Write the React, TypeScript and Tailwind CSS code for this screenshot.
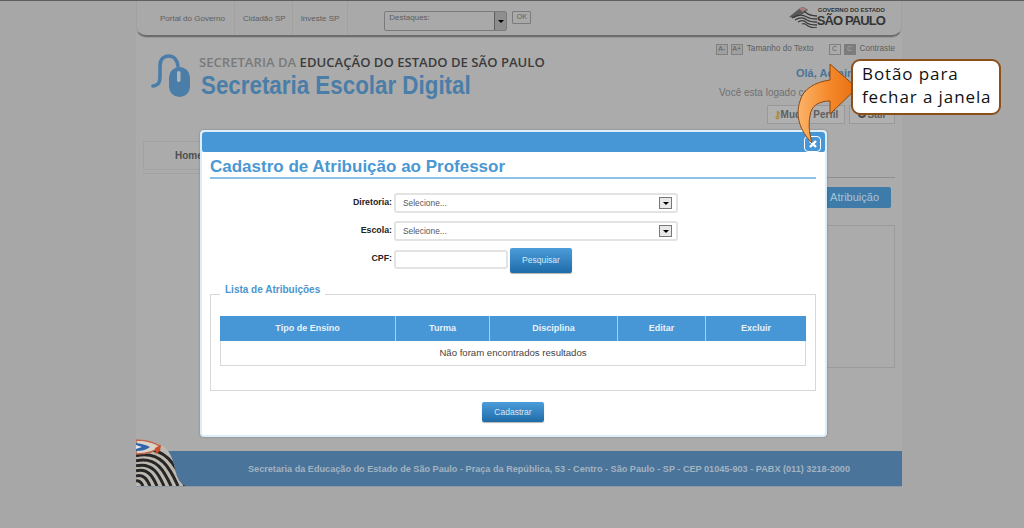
import React from 'react';

const columns = [
  { label: 'Tipo de Ensino', width: 'w-[176px]' },
  { label: 'Turma', width: 'w-[94px]' },
  { label: 'Disciplina', width: 'w-[128px]' },
  { label: 'Editar', width: 'w-[88px]' },
  { label: 'Excluir', width: 'flex-1' },
];

function SelectBox({ width, children }: { width: string; children?: React.ReactNode }) {
  return (
    <div className={`${width} h-[20px] bg-white border-2 border-[#e3e3e3] rounded-[3px] flex items-center justify-between pl-[7px] pr-[4px]`}>
      <span className="text-[8.4px] text-[#555555]">{children}</span>
      <span className="w-[13px] h-[12px] border border-[#777777] bg-[#e9e9e9] flex items-center justify-center">
        <span className="w-0 h-0 border-x-[3px] border-x-transparent border-t-[3px] border-t-black" />
      </span>
    </div>
  );
}

function BlueButton({ className, children }: { className: string; children: React.ReactNode }) {
  return (
    <button className={`${className} rounded-[2px] bg-gradient-to-b from-[#4c9cdb] to-[#1d6ca8] text-[8.5px] text-[#d8e8f4] shadow-[0_1px_1px_rgba(0,0,0,0.3)]`}>
      {children}
    </button>
  );
}

function FormRow({ label, children, className }: { label: string; children: React.ReactNode; className: string }) {
  return (
    <div className={`flex ${className}`}>
      <label className="w-[182px] pt-[3px] text-right text-[8.8px] font-bold text-[#222222]">{label}</label>
      <div className="ml-[2px] flex gap-[2px]">{children}</div>
    </div>
  );
}

const archRadii = [7, 14, 21, 28, 35, 42, 49];

function SpFlag() {
  return (
    <svg width="50" height="47" viewBox="0 0 50 47" className="shrink-0">
      <defs>
        <clipPath id="hump">
          <path d="M0 0 C10 1 20 3 27 7 C34 12 37 20 39 30 C41 39 44 45 50 47 L0 47 Z" />
        </clipPath>
      </defs>
      <g clipPath="url(#hump)">
        <rect width="50" height="47" fill="#bdb8b0" />
        {archRadii.map((r) => (
          <path
            key={r}
            d={`M0 ${47 - r * 0.72} C${r * 0.6} ${47 - r * 0.86} ${r * 0.82} ${47 - r * 0.4} ${r} 47`}
            stroke="#262626"
            strokeWidth="3"
            fill="none"
          />
        ))}
      </g>
      <path d="M0 1 C9 1 17 3 24 7 C20 12 12 15 0 15 Z" fill="#d9d3ca" stroke="#c0664c" strokeWidth="1.6" />
      <path d="M0 4 C6 5 11 6 14 8 C10 11 5 12 0 12 Z" fill="#2f62a8" />
      <path d="M0 6 L6 8 L0 10 Z" fill="#e3e7ea" />
      <path d="M19 9 L25 6 L24 12 L20 15 Z" fill="#c8502c" />
    </svg>
  );
}

function GovLogo() {
  return (
    <div className="flex items-center -mt-[3px]">
      <svg width="28" height="22" viewBox="0 0 28 22" className="shrink-0">
        <path d="M0 11 L11 2 C14 0 17 2 19 4 L14 8 L5 12 Z" fill="#595959" />
        <path d="M10 3 C12 0 16 1 18 4 L14 6 Z" fill="#a57d78" />
        <path d="M3 12 C9 8 13 8 18 11 C21 13 24 13 28 13 M6 14 C11 11 14 11 18 14 C21 16 24 16 28 16 M9 16 C13 14 15 14 18 17 C21 19 24 19 28 19 M13 18 C15 17 17 18 19 20 C21 21 24 22 28 22 M15 5 C18 8 22 10 28 10" stroke="#3b3b3b" strokeWidth="1.3" fill="none" />
      </svg>
      <div className="flex flex-col items-end text-[#343434] font-bold leading-none">
        <span className="text-[6px] tracking-[-0.02px]">GOVERNO DO ESTADO</span>
        <span className="text-[13px] tracking-[-0.9px] mt-[1px]">SÃO PAULO</span>
      </div>
    </div>
  );
}

export default function App() {
  return (
    <div className="relative w-[1024px] h-[528px] overflow-hidden bg-[#a7a7a7] border-t border-[#5e5e5e] font-['Liberation_Sans',Arial,sans-serif]">
      <div className="ml-[136px] w-[766px] h-[486px] flex flex-col bg-[#ababab]">
        {/* top bar */}
        <div className="h-[36px] shrink-0 flex items-center pl-[15px] pr-[16px] rounded-b-[10px] border-b-2 border-x border-x-[#a0a0a0] border-b-[#6d6d6d] bg-[#a9a9a9] text-[8px] text-[#5e5e5e] shadow-[0_1px_0_#9a9a9a]">
          <span className="pl-[8px] pr-[9px] pt-[2px] h-full flex items-center border-r border-[#a1a1a1]">Portal do Governo</span>
          <span className="pl-[8px] pr-[6px] pt-[2px] h-full flex items-center border-r border-[#a1a1a1]">Cidadão SP</span>
          <span className="px-[8px] pt-[2px] h-full flex items-center border-r border-[#a1a1a1]">Investe SP</span>
          <div className="ml-[36px] w-[123px] h-[20px] mt-[6px] border border-[#7b7b7b] rounded-[2px] flex justify-between pl-[4px]">
            <span className="leading-[11px]">Destaques:</span>
            <span className="w-[12px] h-full bg-[#8e8e8e] border-l border-[#5e5e5e] flex items-center justify-center">
              <span className="w-0 h-0 border-x-[3px] border-x-transparent border-t-[3px] border-t-black" />
            </span>
          </div>
          <span className="ml-[5px] mt-[-1px] w-[19px] h-[13px] border border-[#7b7b7b] rounded-[1px] text-[7px] flex items-center justify-center">OK</span>
          <div className="ml-auto"><GovLogo /></div>
        </div>

        {/* logo and tools */}
        <div className="h-[104px] shrink-0 flex justify-between pr-[7px]">
          <div className="flex pl-[15px] pt-[17px]">
            <svg width="40" height="46" viewBox="0 0 40 46" className="shrink-0">
              <path d="M2 32 C8 31 9 28 9 22 L9 12 C9 5 13 2 18 2 C23 2 26 6 27 12" stroke="#4a7ea8" strokeWidth="3.6" strokeLinecap="round" fill="none" />
              <rect x="18" y="13" width="21" height="30" rx="10.5" fill="#4a7ea8" />
              <rect x="26" y="17" width="3.5" height="11" rx="1.7" fill="#b5b5b5" />
            </svg>
            <div className="ml-[8px]">
              <div className="font-['Open_Sans',sans-serif] font-semibold text-[13.1px] leading-[18px] text-[#7a7a7a] whitespace-nowrap mt-[-1px]">
                SECRETARIA DA <span className="text-[#3c3c3c]">EDUCAÇÃO DO ESTADO DE SÃO PAULO</span>
              </div>
              <div className="ml-[2px] -mt-[1px] origin-left scale-x-[0.86] font-bold text-[26px] leading-[30px] text-[#4a7ea8] whitespace-nowrap">
                Secretaria Escolar Digital
              </div>
            </div>
          </div>
          <div className="w-[190px] pt-[6px] flex flex-col items-end text-[#5e5e5e]">
            <div className="flex items-center text-[8.2px] h-[12px]">
              <span className="w-[12px] h-[11px] border border-[#808080] bg-[#a0a0a0] text-[7px] flex items-center justify-center">A-</span>
              <span className="ml-[3px] w-[12px] h-[11px] border border-[#808080] bg-[#a0a0a0] text-[7px] flex items-center justify-center">A+</span>
              <span className="ml-[4px]">Tamanho do Texto</span>
              <span className="ml-[15px] w-[12px] h-[11px] border border-[#808080] text-[7px] flex items-center justify-center">C</span>
              <span className="ml-[3px] w-[12px] h-[11px] bg-[#7c7c7c] text-[7px] text-[#a9a9a9] flex items-center justify-center">C</span>
              <span className="ml-[4px]">Contraste</span>
            </div>
            <div className="mt-[10px] text-[11px] font-bold text-[#4a7499] self-start ml-[91px] whitespace-nowrap">Olá, Admin</div>
            <div className="mt-[3px] text-[10px] text-[#707070] self-start ml-[14px] whitespace-nowrap">Você esta logado como</div>
            <div className="mt-[5px] flex gap-[4px] text-[10px] font-bold text-[#5e5e5e]">
              <span className="w-[78px] h-[19px] border border-[#999999] bg-[#b0b0b0] flex items-center justify-center whitespace-nowrap">
                <span className="text-[#a88b3c]">⚷</span>Mudar Perfil
              </span>
              <span className="w-[46px] h-[19px] border border-[#999999] bg-[#b0b0b0] flex items-center justify-center gap-[2px]">
                <span className="w-[8px] h-[8px] rounded-full border-2 border-[#4a4a4a]" />Sair
              </span>
            </div>
          </div>
        </div>

        {/* nav */}
        <div className="h-[29px] shrink-0 mx-[7px] flex">
          <div className="w-[120px] border border-[#a2a2a2] pl-[31px] pt-[6px] text-[10px] font-bold text-[#4f4f4f] shadow-[0_3px_0_#ababab,0_4px_0_#a2a2a2]">Home</div>
        </div>
        <div className="ml-[100px] mr-[7px] mt-[7px] border-t border-[#8f8f8f]" />

        {/* page content behind the dialog */}
        <div className="flex justify-end mr-[11px] mt-[9px]">
          <span className="w-[75px] h-[21px] bg-[#3f7ba8] rounded-[2px] text-[11px] text-[#a8c4d8] flex items-center justify-end pr-[12px]">Atribuição</span>
        </div>
        <div className="mt-[17px] ml-[100px] mr-[7px] h-[143px] border border-[#9b9b9b]" />

        {/* footer */}
        <div className="mt-auto relative h-[36px] shrink-0 bg-[#4a7499] border-b border-[#8d9aa5] flex items-center justify-center pl-[60px] pt-[2px]">
          <span className="text-[9.13px] font-bold text-[#a3b3c1] whitespace-nowrap">
            Secretaria da Educação do Estado de São Paulo - Praça da República, 53 - Centro - São Paulo - SP - CEP 01045-903 - PABX (011) 3218-2000
          </span>
          <div className="absolute left-0 bottom-0 h-[47px]"><SpFlag /></div>
        </div>
      </div>

      {/* dialog */}
      <div className="absolute left-[200px] top-[129px] w-[627px] h-[307px] bg-white border-2 border-[#dceefa] rounded-[4px] shadow-[0_0_2px_rgba(0,0,0,0.3)]">
        <div className="h-[20px] bg-[#4796d6] rounded-t-[3px] rounded-b-[2px] flex justify-end items-center pr-[4px]">
          <button className="mt-[3px] w-[17px] h-[16px] rounded-[4px] border border-white flex items-center justify-center">
            <svg width="8" height="8" viewBox="0 0 8 8">
              <path d="M1 1 L7 7 M7 1 L1 7" stroke="white" strokeWidth="2.4" />
            </svg>
          </button>
        </div>
        <div className="pl-[8px] pr-[9px]">
          <h1 className="mt-[4px] text-[17px] leading-[21px] font-bold text-[#4a98d3] border-b-2 border-[#8cc2e8]">
            Cadastro de Atribuição ao Professor
          </h1>
          <FormRow label="Diretoria:" className="mt-[14px]">
            <SelectBox width="w-[284px]">Selecione...</SelectBox>
          </FormRow>
          <FormRow label="Escola:" className="mt-[8px]">
            <SelectBox width="w-[284px]">Selecione...</SelectBox>
          </FormRow>
          <FormRow label="CPF:" className="mt-[8px]">
            <input className="w-[114px] h-[19px] bg-white border-2 border-[#e3e3e3] rounded-[3px] mt-[1px]" />
            <BlueButton className="w-[62px] h-[25px] -mt-[1px]">Pesquisar</BlueButton>
          </FormRow>

          <fieldset className="mt-[11px] h-[107px] border border-[#d8d8d8] px-[9px] pt-[12px]">
            <legend className="px-[5px] pb-[8px] text-[10px] font-bold text-[#4b95cf] leading-[12px]">Lista de Atribuições</legend>
            <div className="flex h-[25px] bg-[#4796d6] text-[9px] font-bold text-[#e8f2fa]">
              {columns.map((col) => (
                <div key={col.label} className={`${col.width} flex items-center justify-center border-r border-[#a9cfec] last:border-r-0`}>
                  {col.label}
                </div>
              ))}
            </div>
            <div className="h-[25px] border-x border-b border-[#d8d8d8] flex items-center justify-center text-[9.6px] text-[#444444]">
              Não foram encontrados resultados
            </div>
          </fieldset>
          <div className="flex justify-center mt-[11px]">
            <BlueButton className="w-[62px] h-[20px]">Cadastrar</BlueButton>
          </div>
        </div>
      </div>

      {/* annotation arrow and balloon */}
      <svg width="1024" height="528" viewBox="0 0 1024 528" className="absolute left-0 top-0 pointer-events-none">
        <defs>
          <linearGradient id="arrowFill" x1="0" y1="0" x2="1" y2="0">
            <stop offset="0" stopColor="#fbb46a" />
            <stop offset="0.5" stopColor="#f58a2c" />
            <stop offset="1" stopColor="#e86f10" />
          </linearGradient>
        </defs>
        <path
          d="M812 142 C800 130 795 115 800 100 C803 88 815 81 830 79 L830 63 L857 87 L830 113 L830 100 C820 100 811 104 810 115 C808 125 810 135 812 142 Z"
          fill="url(#arrowFill)"
          stroke="#8a4a12"
          strokeWidth="1"
        />
      </svg>
      <div className="absolute left-[851px] top-[58px] w-[150px] h-[56px] bg-white border-2 border-[#8b4f1c] rounded-[9px] pl-[9px] pt-[1px] font-['Open_Sans',sans-serif] text-[17px] leading-[23px] tracking-[0.9px] text-[#111111] whitespace-nowrap">
        Botão para<br />fechar a janela
      </div>
    </div>
  );
}
